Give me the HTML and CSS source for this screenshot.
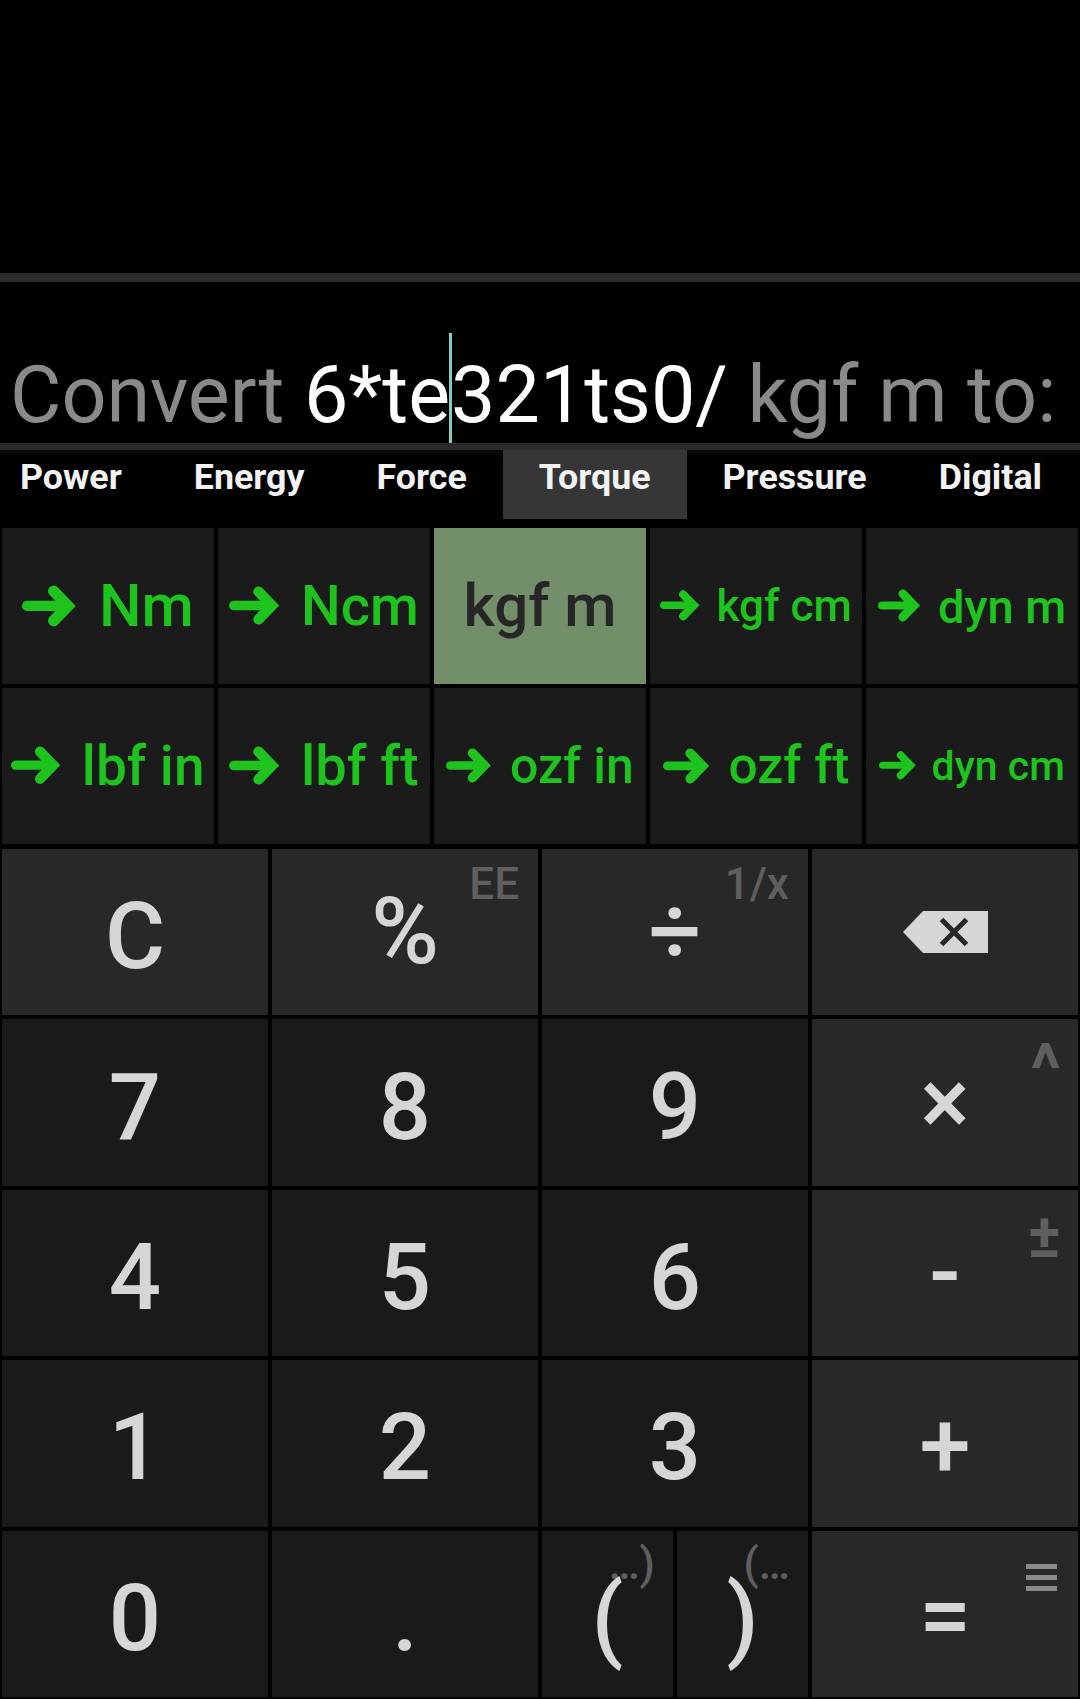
FILE: index.html
```html
<!DOCTYPE html>
<html lang="en">
<head>
<meta charset="utf-8">
<title>Unit Converter Calculator</title>
<link rel="stylesheet" href="styles.css">
</head>
<body>
<div class="screen">
  <div class="topspace"></div>
  <div class="rule rule-top"></div>
  <div class="display">
    <p class="expr"><span class="muted">Convert </span><span class="input">6*te<span class="cursor"></span>321ts0/</span><span class="muted"> kgf m to:</span></p>
  </div>
  <div class="rule rule-bottom"></div>
  <nav class="tabs">
    <span class="tab">Power</span>
    <span class="tab">Energy</span>
    <span class="tab">Force</span>
    <span class="tab active">Torque</span>
    <span class="tab">Pressure</span>
    <span class="tab">Digital</span>
  </nav>
  <div class="units">
    <div class="unit fs60"><svg class="arrow" viewBox="0 0 54 42"><line x1="5" y1="20.5" x2="42" y2="20.5"/><polyline points="31,6 45,20.5 31,35"/></svg>Nm</div>
    <div class="unit fs56"><svg class="arrow" viewBox="0 0 54 42"><line x1="5" y1="20.5" x2="42" y2="20.5"/><polyline points="31,6 45,20.5 31,35"/></svg>Ncm</div>
    <div class="unit fs60 selected">kgf m</div>
    <div class="unit fs44"><svg class="arrow" viewBox="0 0 54 42"><line x1="5" y1="20.5" x2="42" y2="20.5"/><polyline points="31,6 45,20.5 31,35"/></svg>kgf cm</div>
    <div class="unit fs47"><svg class="arrow" viewBox="0 0 54 42"><line x1="5" y1="20.5" x2="42" y2="20.5"/><polyline points="31,6 45,20.5 31,35"/></svg>dyn m</div>
    <div class="unit fs55"><svg class="arrow" viewBox="0 0 54 42"><line x1="5" y1="20.5" x2="42" y2="20.5"/><polyline points="31,6 45,20.5 31,35"/></svg>lbf in</div>
    <div class="unit fs56"><svg class="arrow" viewBox="0 0 54 42"><line x1="5" y1="20.5" x2="42" y2="20.5"/><polyline points="31,6 45,20.5 31,35"/></svg>lbf ft</div>
    <div class="unit fs50"><svg class="arrow" viewBox="0 0 54 42"><line x1="5" y1="20.5" x2="42" y2="20.5"/><polyline points="31,6 45,20.5 31,35"/></svg>ozf in</div>
    <div class="unit fs51"><svg class="arrow" viewBox="0 0 54 42"><line x1="5" y1="20.5" x2="42" y2="20.5"/><polyline points="31,6 45,20.5 31,35"/></svg>ozf ft</div>
    <div class="unit fs41"><svg class="arrow" viewBox="0 0 54 42"><line x1="5" y1="20.5" x2="42" y2="20.5"/><polyline points="31,6 45,20.5 31,35"/></svg>dyn cm</div>
  </div>
  <div class="keypad">
    <div class="key op">C</div>
    <div class="key op sym"><span class="sup">EE</span>%</div>
    <div class="key op sym"><span class="sup">1/x</span>÷</div>
    <div class="key op sym"><svg class="backspace" viewBox="0 0 85 42"><path class="bs-body" d="M20 0H85V42H20L0 21Z"/><path class="bs-x" d="M38.5 8.5L63.5 33.5M63.5 8.5L38.5 33.5"/></svg></div>

    <div class="key">7</div>
    <div class="key">8</div>
    <div class="key">9</div>
    <div class="key op sym"><span class="sup caret">^</span>×</div>

    <div class="key">4</div>
    <div class="key">5</div>
    <div class="key">6</div>
    <div class="key op sym"><span class="sup pm">±</span>-</div>

    <div class="key">1</div>
    <div class="key">2</div>
    <div class="key">3</div>
    <div class="key op sym-mid">+</div>

    <div class="key">0</div>
    <div class="key">.</div>
    <div class="pair">
      <div class="key"><span class="sup paren">…)</span><span class="main">(</span></div>
      <div class="key"><span class="sup paren">(…</span><span class="main">)</span></div>
    </div>
    <div class="key op sym-mid"><svg class="menu" viewBox="0 0 31 27"><rect x="0" y="0" width="31" height="5"/><rect x="0" y="11" width="31" height="5"/><rect x="0" y="22" width="31" height="5"/></svg>=</div>
  </div>
</div>
</body>
</html>
```
FILE: styles.css
```css
html, body {
  margin: 0;
  padding: 0;
  background: #000;
}

body {
  font-family: Roboto, "Noto Sans", "Liberation Sans", sans-serif;
}

.screen {
  width: 1080px;
  height: 1699px;
  display: flex;
  flex-direction: column;
  overflow: hidden;
  background: #000;
}

.topspace {
  height: 273px;
  flex: none;
}

.rule {
  flex: none;
  background: #2b2b2b;
}

.rule-top {
  height: 9px;
}

.rule-bottom {
  height: 7px;
}

.display {
  height: 161px;
  flex: none;
  display: flex;
  align-items: flex-end;
  padding-left: 10px;
}

.expr {
  margin: 0;
  font-size: 79px;
  line-height: 79px;
  white-space: pre;
  color: #ffffff;
}

.muted {
  color: #8a8a8a;
}

.cursor {
  display: inline-block;
  width: 3px;
  height: 110px;
  margin: 0 -1px;
  background: #80cbc4;
  vertical-align: -21px;
}

.tabs {
  height: 69px;
  flex: none;
  display: flex;
  margin-left: -16px;
  background: linear-gradient(#0c0c0c, #000 9px);
}

.tab {
  flex: none;
  padding: 3px 36px 0;
  font-size: 35.8px;
  font-weight: 700;
  line-height: 48px;
  color: #f2f2f2;
  white-space: nowrap;
}

.tab.active {
  background: #363636;
}

.units {
  flex: none;
  margin-top: 9px;
  display: grid;
  grid-template-columns: repeat(5, 1fr);
  grid-template-rows: repeat(2, 156px);
  gap: 4px;
  padding: 0 2px;
}

.unit {
  background: #1b1b1b;
  display: flex;
  align-items: center;
  justify-content: center;
  color: #1ec31e;
  font-weight: 500;
  line-height: 1;
  white-space: nowrap;
}

.unit.selected {
  background: #728f6a;
  color: #262626;
}

.fs60 { font-size: 60px; }
.fs56 { font-size: 56px; }
.fs55 { font-size: 55px; }
.fs51 { font-size: 51.5px; }
.fs50 { font-size: 50px; }
.fs47 { font-size: 47px; }
.fs44 { font-size: 44px; }
.fs41 { font-size: 41px; }

.arrow {
  width: 0.92em;
  height: 0.715em;
  margin-right: 0.36em;
  flex: none;
  fill: none;
  stroke: #1ec31e;
  stroke-linecap: round;
  stroke-linejoin: miter;
}

.arrow line {
  stroke-width: 10;
}

.arrow polyline {
  stroke-width: 11;
}

.keypad {
  flex: 1;
  margin-top: 5px;
  display: grid;
  grid-template-columns: repeat(4, 1fr);
  grid-template-rows: repeat(5, 1fr);
  gap: 4px;
  padding: 0 2px 2px;
  min-height: 0;
}

.key {
  position: relative;
  background: #1a1a1a;
  display: flex;
  align-items: center;
  justify-content: center;
  font-size: 92px;
  font-weight: 500;
  line-height: 1;
  color: #d6d6d6;
  padding-top: 10px;
  box-sizing: border-box;
  min-width: 0;
}

.key.op {
  background: #282828;
}

.key.sym {
  padding-top: 0;
}

.key.sym-mid {
  padding-top: 5px;
}

.pair {
  display: flex;
  gap: 4px;
  min-width: 0;
}

.pair .key {
  flex: 1;
}

.main {
  position: relative;
  z-index: 1;
}

.sup {
  position: absolute;
  top: 13px;
  right: 19px;
  font-size: 44px;
  font-weight: 500;
  line-height: 1;
  color: #5f5f5f;
}

.sup.caret {
  top: 15px;
  right: 17px;
  font-size: 70px;
  font-weight: 700;
}

.sup.pm {
  top: 15px;
  right: 17px;
  font-size: 62px;
  font-weight: 700;
}

.sup.paren {
  top: 11px;
  right: 18px;
}

.backspace {
  width: 85px;
  height: 42px;
}

.bs-body {
  fill: #d6d6d6;
}

.bs-x {
  fill: none;
  stroke: #282828;
  stroke-width: 5;
}

.menu {
  position: absolute;
  top: 33px;
  right: 21px;
  width: 31px;
  height: 27px;
  fill: #8a8a8a;
}
```
